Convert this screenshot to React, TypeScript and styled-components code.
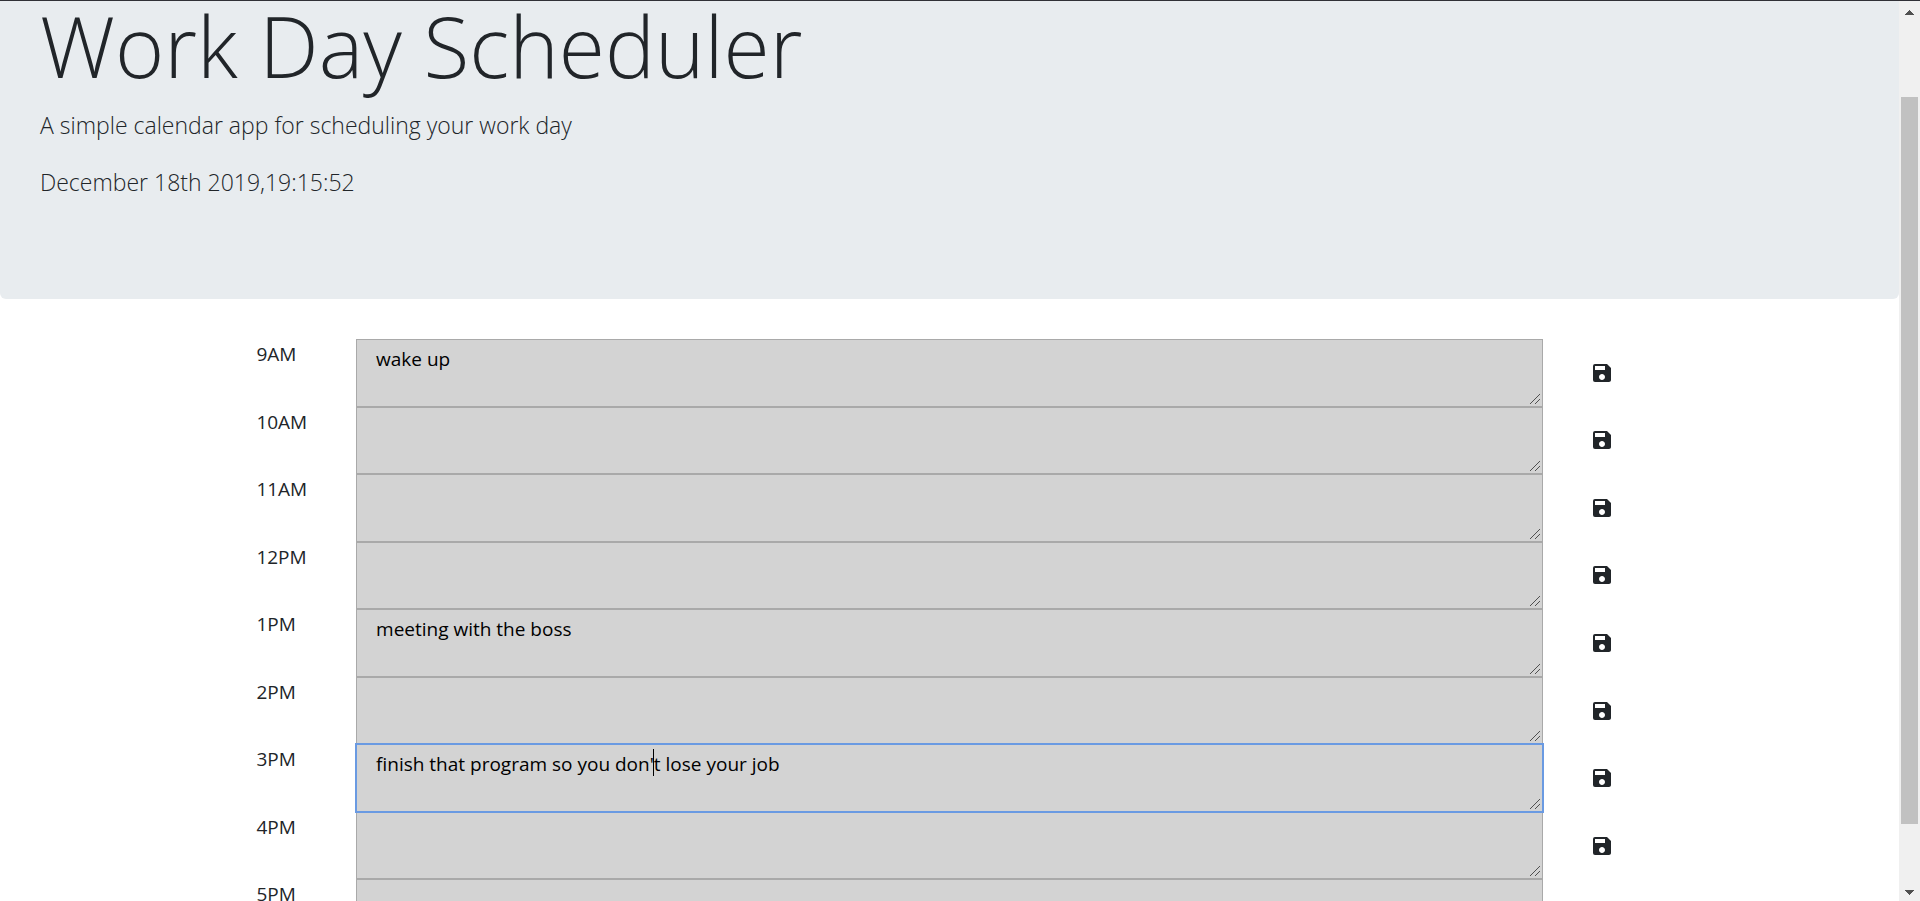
import React from "react";
import styled, { createGlobalStyle } from "styled-components";
import { MdSave } from "react-icons/md";

const GlobalStyle = createGlobalStyle`
  *, *::before, *::after { box-sizing: border-box; }
  body {
    margin: 0;
    overflow: hidden;
    background: #fff;
    color: #212529;
    font-family: "Open Sans", "Noto Sans", sans-serif;
    font-size: 19px;
    line-height: 30px;
  }
`;

const Shell = styled.div`
  display: flex;
  height: 100vh;
  border-top: 1px solid #303036;
`;

const Page = styled.div`
  flex: 1;
  min-width: 0;
  overflow: hidden;
`;

const Jumbotron = styled.header`
  padding: 0 40px 78px;
  margin-bottom: 40px;
  background: #e8ecef;
  border-radius: 0 0 6px 6px;
`;

const Title = styled.h1`
  margin: 0 0 16px;
  font-size: 84px;
  font-weight: 300;
  line-height: 90px;
`;

const Lead = styled.p`
  margin: 0 0 20px;
  font-size: 23px;
  font-weight: 300;
  line-height: 37px;
`;

const Schedule = styled.main`
  display: grid;
  grid-auto-rows: 1fr;
  width: 75%;
  height: 608px;
  margin: 0 auto;
`;

const TimeBlock = styled.div`
  display: grid;
  grid-template-columns: 1fr 10fr 1fr;
  min-height: 0;
`;

const Hour = styled.label`
  padding-left: 19px;
`;

const Field = styled.div`
  position: relative;
  min-height: 0;
`;

const Entry = styled.textarea`
  display: block;
  width: 100%;
  height: 100%;
  margin: 0;
  padding: 4px 19px;
  border: 1px solid #a9a9a9;
  border-radius: 0;
  background: #d3d3d3;
  color: #000;
  font: inherit;
  resize: none;
  overflow: hidden;

  &:focus {
    position: relative;
    z-index: 1;
    outline: 1px solid #6a9ae2;
    border-color: #6a9ae2;
    caret-color: transparent;
  }
`;

const Grip = styled.svg`
  position: absolute;
  z-index: 2;
  right: 3px;
  bottom: 3px;
  width: 10px;
  height: 10px;
  fill: none;
  stroke: #505050;
  pointer-events: none;
`;

const Caret = styled.span`
  position: absolute;
  z-index: 2;
  top: 5px;
  left: 297px;
  width: 1px;
  height: 27px;
  background: #000;
`;

const SaveButton = styled.button`
  display: flex;
  align-items: center;
  justify-content: center;
  padding: 0;
  border: 0;
  background: none;
  color: #212529;
  cursor: pointer;
`;

const ScrollBar = styled.div`
  display: flex;
  flex-direction: column;
  align-items: center;
  justify-content: space-between;
  width: 21px;
  padding: 9px 0 6px;
  background: #f0f0f0;
`;

const Arrow = styled.svg`
  display: block;
  width: 9px;
  height: 5px;
  fill: #505050;
`;

const Track = styled.div`
  display: flex;
  flex: 1;
  flex-direction: column;
  width: 17px;
  padding: 82px 0 66px;
`;

const Thumb = styled.div`
  flex: 1;
  background: #c1c1c1;
`;

const blocks = [
  { hour: "9AM", text: "wake up" },
  { hour: "10AM", text: "" },
  { hour: "11AM", text: "" },
  { hour: "12PM", text: "" },
  { hour: "1PM", text: "meeting with the boss" },
  { hour: "2PM", text: "" },
  { hour: "3PM", text: "finish that program so you don't lose your job", active: true },
  { hour: "4PM", text: "" },
  { hour: "5PM", text: "" },
];

export default function App() {
  return (
    <Shell>
      <GlobalStyle />
      <Page>
        <Jumbotron>
          <Title>Work Day Scheduler</Title>
          <Lead>A simple calendar app for scheduling your work day</Lead>
          <Lead>December 18th 2019,19:15:52</Lead>
        </Jumbotron>
        <Schedule>
          {blocks.map(({ hour, text, active }) => (
            <TimeBlock key={hour}>
              <Hour htmlFor={`entry-${hour}`}>{hour}</Hour>
              <Field>
                <Entry
                  id={`entry-${hour}`}
                  rows={1}
                  defaultValue={text}
                  autoFocus={active}
                  spellCheck={false}
                />
                {active && <Caret />}
                <Grip viewBox="0 0 10 10" aria-hidden="true">
                  <path d="M0 10L10 0M5 10L10 5" />
                </Grip>
              </Field>
              <SaveButton type="button" aria-label={`Save ${hour}`}>
                <MdSave size={24} />
              </SaveButton>
            </TimeBlock>
          ))}
        </Schedule>
      </Page>
      <ScrollBar aria-hidden="true">
        <Arrow viewBox="0 0 9 5">
          <path d="M4 0h1v1h1v1h1v1h1v1h1v1H0V4h1V3h1V2h1V1h1z" />
        </Arrow>
        <Track>
          <Thumb />
        </Track>
        <Arrow viewBox="0 0 9 5">
          <path d="M0 0h9v1H8v1H7v1H6v1H5v1H4V4H3V3H2V2H1V1H0z" />
        </Arrow>
      </ScrollBar>
    </Shell>
  );
}
